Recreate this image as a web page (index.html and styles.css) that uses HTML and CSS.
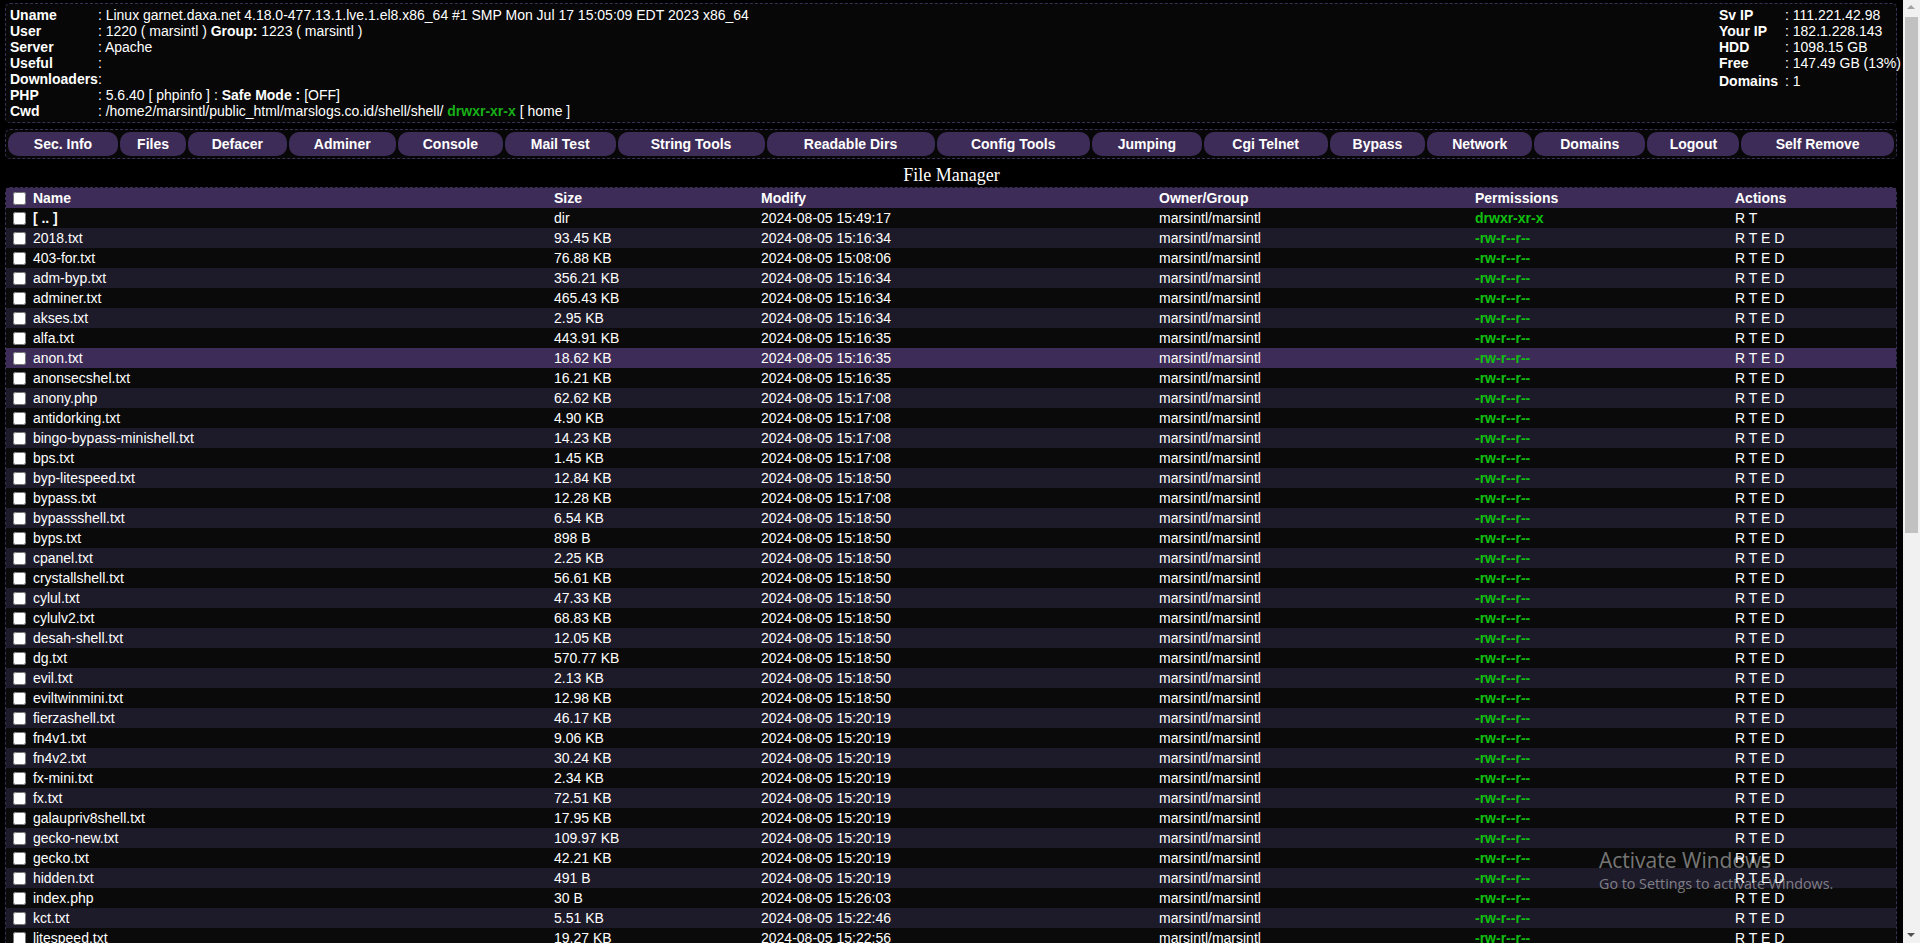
FILE: index.html
```html
<!DOCTYPE html>
<html>
<head>
<meta charset="utf-8">
<title>File Manager</title>
<link rel="stylesheet" href="styles.css">
</head>
<body>
<div class="page">
  <div class="info-box">
    <table class="sysinfo">
      <tr><td class="lbl">Uname</td><td>: Linux garnet.daxa.net 4.18.0-477.13.1.lve.1.el8.x86_64 #1 SMP Mon Jul 17 15:05:09 EDT 2023 x86_64</td></tr>
      <tr><td class="lbl">User</td><td>: 1220 ( marsintl ) <b>Group:</b> 1223 ( marsintl )</td></tr>
      <tr><td class="lbl">Server</td><td>: Apache</td></tr>
      <tr><td class="lbl">Useful</td><td>: </td></tr>
      <tr><td class="lbl">Downloaders</td><td>: </td></tr>
      <tr><td class="lbl">PHP</td><td>: 5.6.40 [ phpinfo ] : <b>Safe Mode :</b> [OFF]</td></tr>
      <tr><td class="lbl">Cwd</td><td>: /home2/marsintl/public_html/marslogs.co.id/shell/shell/ <span class="perm-hdr">drwxr-xr-x</span> [ home ]</td></tr>
    </table>
    <table class="netinfo">
      <tr><td class="lbl">Sv IP</td><td>: 111.221.42.98</td></tr>
      <tr><td class="lbl">Your IP</td><td>: 182.1.228.143</td></tr>
      <tr><td class="lbl">HDD</td><td>: 1098.15 GB</td></tr>
      <tr><td class="lbl">Free</td><td>: 147.49 GB (13%)</td></tr>
      <tr class="domains-row"><td class="lbl">Domains</td><td>: 1</td></tr>
    </table>
  </div>

  <div class="nav-box">
    <div class="nav">
      <a class="btn">Sec. Info</a>
      <a class="btn">Files</a>
      <a class="btn">Defacer</a>
      <a class="btn">Adminer</a>
      <a class="btn">Console</a>
      <a class="btn">Mail Test</a>
      <a class="btn">String Tools</a>
      <a class="btn">Readable Dirs</a>
      <a class="btn">Config Tools</a>
      <a class="btn">Jumping</a>
      <a class="btn">Cgi Telnet</a>
      <a class="btn">Bypass</a>
      <a class="btn">Network</a>
      <a class="btn">Domains</a>
      <a class="btn">Logout</a>
      <a class="btn">Self Remove</a>
    </div>
  </div>

  <div class="title">File Manager</div>

  <table class="files">
    <thead>
      <tr>
        <th class="c-name"><input type="checkbox"> Name</th>
        <th class="c-size">Size</th>
        <th class="c-mod">Modify</th>
        <th class="c-own">Owner/Group</th>
        <th class="c-perm">Permissions</th>
        <th class="c-act">Actions</th>
      </tr>
    </thead>
    <tbody>
      <tr><td><input type="checkbox"> <b>[ .. ]</b></td><td>dir</td><td>2024-08-05 15:49:17</td><td>marsintl/marsintl</td><td class="perm">drwxr-xr-x</td><td>R T</td></tr>
      <tr><td><input type="checkbox"> 2018.txt</td><td>93.45 KB</td><td>2024-08-05 15:16:34</td><td>marsintl/marsintl</td><td class="perm">-rw-r--r--</td><td>R T E D</td></tr>
      <tr><td><input type="checkbox"> 403-for.txt</td><td>76.88 KB</td><td>2024-08-05 15:08:06</td><td>marsintl/marsintl</td><td class="perm">-rw-r--r--</td><td>R T E D</td></tr>
      <tr><td><input type="checkbox"> adm-byp.txt</td><td>356.21 KB</td><td>2024-08-05 15:16:34</td><td>marsintl/marsintl</td><td class="perm">-rw-r--r--</td><td>R T E D</td></tr>
      <tr><td><input type="checkbox"> adminer.txt</td><td>465.43 KB</td><td>2024-08-05 15:16:34</td><td>marsintl/marsintl</td><td class="perm">-rw-r--r--</td><td>R T E D</td></tr>
      <tr><td><input type="checkbox"> akses.txt</td><td>2.95 KB</td><td>2024-08-05 15:16:34</td><td>marsintl/marsintl</td><td class="perm">-rw-r--r--</td><td>R T E D</td></tr>
      <tr><td><input type="checkbox"> alfa.txt</td><td>443.91 KB</td><td>2024-08-05 15:16:35</td><td>marsintl/marsintl</td><td class="perm">-rw-r--r--</td><td>R T E D</td></tr>
      <tr class="hover"><td><input type="checkbox"> anon.txt</td><td>18.62 KB</td><td>2024-08-05 15:16:35</td><td>marsintl/marsintl</td><td class="perm">-rw-r--r--</td><td>R T E D</td></tr>
      <tr><td><input type="checkbox"> anonsecshel.txt</td><td>16.21 KB</td><td>2024-08-05 15:16:35</td><td>marsintl/marsintl</td><td class="perm">-rw-r--r--</td><td>R T E D</td></tr>
      <tr><td><input type="checkbox"> anony.php</td><td>62.62 KB</td><td>2024-08-05 15:17:08</td><td>marsintl/marsintl</td><td class="perm">-rw-r--r--</td><td>R T E D</td></tr>
      <tr><td><input type="checkbox"> antidorking.txt</td><td>4.90 KB</td><td>2024-08-05 15:17:08</td><td>marsintl/marsintl</td><td class="perm">-rw-r--r--</td><td>R T E D</td></tr>
      <tr><td><input type="checkbox"> bingo-bypass-minishell.txt</td><td>14.23 KB</td><td>2024-08-05 15:17:08</td><td>marsintl/marsintl</td><td class="perm">-rw-r--r--</td><td>R T E D</td></tr>
      <tr><td><input type="checkbox"> bps.txt</td><td>1.45 KB</td><td>2024-08-05 15:17:08</td><td>marsintl/marsintl</td><td class="perm">-rw-r--r--</td><td>R T E D</td></tr>
      <tr><td><input type="checkbox"> byp-litespeed.txt</td><td>12.84 KB</td><td>2024-08-05 15:18:50</td><td>marsintl/marsintl</td><td class="perm">-rw-r--r--</td><td>R T E D</td></tr>
      <tr><td><input type="checkbox"> bypass.txt</td><td>12.28 KB</td><td>2024-08-05 15:17:08</td><td>marsintl/marsintl</td><td class="perm">-rw-r--r--</td><td>R T E D</td></tr>
      <tr><td><input type="checkbox"> bypassshell.txt</td><td>6.54 KB</td><td>2024-08-05 15:18:50</td><td>marsintl/marsintl</td><td class="perm">-rw-r--r--</td><td>R T E D</td></tr>
      <tr><td><input type="checkbox"> byps.txt</td><td>898 B</td><td>2024-08-05 15:18:50</td><td>marsintl/marsintl</td><td class="perm">-rw-r--r--</td><td>R T E D</td></tr>
      <tr><td><input type="checkbox"> cpanel.txt</td><td>2.25 KB</td><td>2024-08-05 15:18:50</td><td>marsintl/marsintl</td><td class="perm">-rw-r--r--</td><td>R T E D</td></tr>
      <tr><td><input type="checkbox"> crystallshell.txt</td><td>56.61 KB</td><td>2024-08-05 15:18:50</td><td>marsintl/marsintl</td><td class="perm">-rw-r--r--</td><td>R T E D</td></tr>
      <tr><td><input type="checkbox"> cylul.txt</td><td>47.33 KB</td><td>2024-08-05 15:18:50</td><td>marsintl/marsintl</td><td class="perm">-rw-r--r--</td><td>R T E D</td></tr>
      <tr><td><input type="checkbox"> cylulv2.txt</td><td>68.83 KB</td><td>2024-08-05 15:18:50</td><td>marsintl/marsintl</td><td class="perm">-rw-r--r--</td><td>R T E D</td></tr>
      <tr><td><input type="checkbox"> desah-shell.txt</td><td>12.05 KB</td><td>2024-08-05 15:18:50</td><td>marsintl/marsintl</td><td class="perm">-rw-r--r--</td><td>R T E D</td></tr>
      <tr><td><input type="checkbox"> dg.txt</td><td>570.77 KB</td><td>2024-08-05 15:18:50</td><td>marsintl/marsintl</td><td class="perm">-rw-r--r--</td><td>R T E D</td></tr>
      <tr><td><input type="checkbox"> evil.txt</td><td>2.13 KB</td><td>2024-08-05 15:18:50</td><td>marsintl/marsintl</td><td class="perm">-rw-r--r--</td><td>R T E D</td></tr>
      <tr><td><input type="checkbox"> eviltwinmini.txt</td><td>12.98 KB</td><td>2024-08-05 15:18:50</td><td>marsintl/marsintl</td><td class="perm">-rw-r--r--</td><td>R T E D</td></tr>
      <tr><td><input type="checkbox"> fierzashell.txt</td><td>46.17 KB</td><td>2024-08-05 15:20:19</td><td>marsintl/marsintl</td><td class="perm">-rw-r--r--</td><td>R T E D</td></tr>
      <tr><td><input type="checkbox"> fn4v1.txt</td><td>9.06 KB</td><td>2024-08-05 15:20:19</td><td>marsintl/marsintl</td><td class="perm">-rw-r--r--</td><td>R T E D</td></tr>
      <tr><td><input type="checkbox"> fn4v2.txt</td><td>30.24 KB</td><td>2024-08-05 15:20:19</td><td>marsintl/marsintl</td><td class="perm">-rw-r--r--</td><td>R T E D</td></tr>
      <tr><td><input type="checkbox"> fx-mini.txt</td><td>2.34 KB</td><td>2024-08-05 15:20:19</td><td>marsintl/marsintl</td><td class="perm">-rw-r--r--</td><td>R T E D</td></tr>
      <tr><td><input type="checkbox"> fx.txt</td><td>72.51 KB</td><td>2024-08-05 15:20:19</td><td>marsintl/marsintl</td><td class="perm">-rw-r--r--</td><td>R T E D</td></tr>
      <tr><td><input type="checkbox"> galaupriv8shell.txt</td><td>17.95 KB</td><td>2024-08-05 15:20:19</td><td>marsintl/marsintl</td><td class="perm">-rw-r--r--</td><td>R T E D</td></tr>
      <tr><td><input type="checkbox"> gecko-new.txt</td><td>109.97 KB</td><td>2024-08-05 15:20:19</td><td>marsintl/marsintl</td><td class="perm">-rw-r--r--</td><td>R T E D</td></tr>
      <tr><td><input type="checkbox"> gecko.txt</td><td>42.21 KB</td><td>2024-08-05 15:20:19</td><td>marsintl/marsintl</td><td class="perm">-rw-r--r--</td><td>R T E D</td></tr>
      <tr><td><input type="checkbox"> hidden.txt</td><td>491 B</td><td>2024-08-05 15:20:19</td><td>marsintl/marsintl</td><td class="perm">-rw-r--r--</td><td>R T E D</td></tr>
      <tr><td><input type="checkbox"> index.php</td><td>30 B</td><td>2024-08-05 15:26:03</td><td>marsintl/marsintl</td><td class="perm">-rw-r--r--</td><td>R T E D</td></tr>
      <tr><td><input type="checkbox"> kct.txt</td><td>5.51 KB</td><td>2024-08-05 15:22:46</td><td>marsintl/marsintl</td><td class="perm">-rw-r--r--</td><td>R T E D</td></tr>
      <tr><td><input type="checkbox"> litespeed.txt</td><td>19.27 KB</td><td>2024-08-05 15:22:56</td><td>marsintl/marsintl</td><td class="perm">-rw-r--r--</td><td>R T E D</td></tr>
    </tbody>
  </table>

  <div class="watermark">
    <div class="wm-title">Activate Windows</div>
    <div class="wm-sub">Go to Settings to activate Windows.</div>
  </div>
</div>
<div class="scrollbar">
  <div class="sb-arrow sb-up"></div>
  <div class="sb-track"><div class="sb-thumb"></div></div>
  <div class="sb-arrow sb-down"></div>
</div>
</body>
</html>
```

FILE: styles.css
```css
html, body {
  margin: 0;
  padding: 0;
  height: 943px;
  overflow: hidden;
  background: #000;
}
body {
  display: flex;
  color: #fff;
  font-family: "Liberation Sans", Arial, sans-serif;
  font-size: 14px;
}
.page {
  position: relative;
  flex: 1;
  min-width: 0;
  height: 943px;
  overflow: hidden;
}

/* info box */
.info-box {
  margin: 3px 6px 0 5px;
  padding: 3px 4px;
  border: 1px dashed #3a2f55;
  border-radius: 5px;
  background: #070707;
  display: flex;
  justify-content: space-between;
  align-items: flex-start;
}
.sysinfo, .netinfo {
  border-collapse: collapse;
  border-spacing: 0;
}
.sysinfo td, .netinfo td {
  padding: 0;
  line-height: 16px;
  white-space: nowrap;
  vertical-align: top;
}
.lbl { font-weight: bold; }
.perm-hdr { color: #17b017; font-weight: bold; }
.netinfo {
  width: 173px;
  table-layout: fixed;
}
.netinfo .lbl { width: 66px; }
.domains-row td { padding-top: 2px; }

/* nav */
.nav-box {
  margin: 6px 6px 0 5px;
  border: 1px dashed #3a2f55;
  border-radius: 5px;
  background: #070707;
}
.nav {
  display: table;
  width: 100%;
  border-spacing: 2px;
}
.btn {
  display: table-cell;
  padding: 4px 4px;
  line-height: 16px;
  background: #3e2c58;
  color: #fff;
  font-weight: bold;
  text-align: center;
  white-space: nowrap;
  border-radius: 10px;
  cursor: pointer;
}

/* title */
.title {
  height: 28px;
  line-height: 33px;
  text-align: center;
  font-family: "Liberation Serif", "Times New Roman", serif;
  font-size: 18px;
}

/* file table */
.files {
  width: calc(100% - 11px);
  margin: 0 6px 0 5px;
  border: 1px dashed #3a2f55;
  border-radius: 5px;
  border-spacing: 0;
  table-layout: fixed;
  background: #0a0a0a;
}
.files th, .files td {
  box-sizing: border-box;
  padding: 2px 3px;
  line-height: 16px;
  text-align: left;
  white-space: nowrap;
  overflow: hidden;
}
.files thead tr { background: #3e2c58; }
.files tbody tr { background: #0a0a0a; }
.files tbody tr:nth-child(even) { background: #1d1a29; }
.files tbody tr.hover { background: #3e2c58; }
.c-name { width: 545px; }
.c-size { width: 207px; }
.c-mod { width: 398px; }
.c-own { width: 316px; }
.c-perm { width: 260px; }
.files input[type="checkbox"] {
  width: 13px;
  height: 13px;
  margin: 0 3px 0 4px;
  vertical-align: -2px;
}
.perm { color: #10c010; font-weight: bold; }

/* watermark overlay */
.watermark {
  position: absolute;
  left: 1599px;
  top: 846px;
  color: rgba(255, 255, 255, 0.45);
  font-family: "Open Sans", "Noto Sans", sans-serif;
  pointer-events: none;
}
.wm-title { font-size: 21px; line-height: 28px; }
.wm-sub { font-size: 14.3px; line-height: 20px; }

/* fake scrollbar */
.scrollbar {
  width: 17px;
  height: 943px;
  background: #f1f1f1;
  display: flex;
  flex-direction: column;
}
.sb-arrow {
  height: 17px;
  position: relative;
}
.sb-track {
  flex: 1;
  padding: 0 2px;
}
.sb-thumb {
  height: 516px;
  background: #c1c1c1;
}
.sb-up::after, .sb-down::after {
  content: "";
  position: absolute;
  left: 4px;
  border-left: 4px solid transparent;
  border-right: 4px solid transparent;
}
.sb-up::after {
  top: 5px;
  border-bottom: 4px solid #a3a3a3;
}
.sb-down::after {
  top: 7px;
  border-top: 4px solid #505050;
}
```
